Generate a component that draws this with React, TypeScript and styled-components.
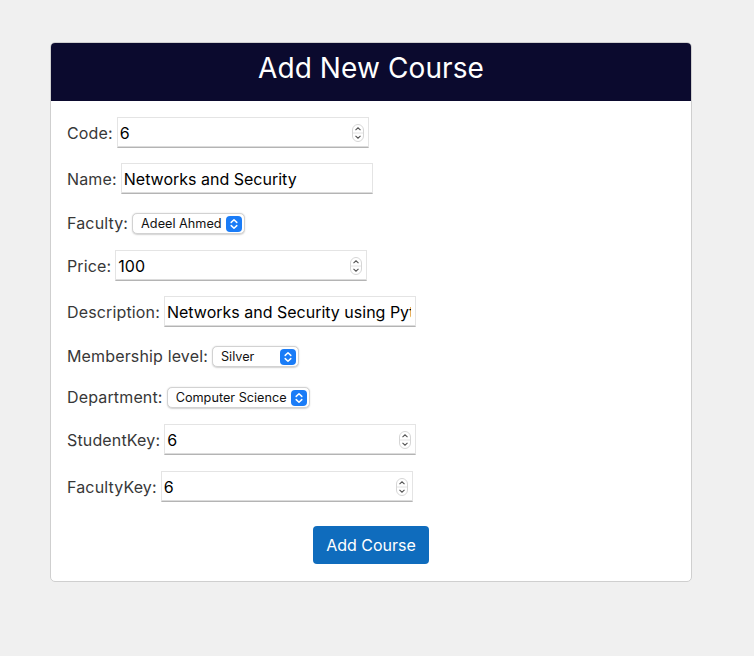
import React from "react";
import styled, { createGlobalStyle } from "styled-components";

const Global = createGlobalStyle`
  html, body { margin: 0; padding: 0; background: #f0f0f0; }
  body { font-family: Inter, "Noto Sans", sans-serif; }
`;

const Page = styled.div`
  padding: 42px 61px 0 50px;
  min-height: 656px;
  box-sizing: border-box;
`;

const Card = styled.div`
  width: 642px;
  background: #fff;
  border: 1px solid #cfcfcf;
  border-radius: 5px;
  overflow: hidden;
  box-sizing: border-box;
`;

const Header = styled.div`
  background: #0b0a2e;
  height: 58px;
  box-sizing: border-box;
  padding-bottom: 9px;
  display: flex;
  align-items: center;
  justify-content: center;
`;

const Title = styled.h2`
  margin: 0;
  color: #fff;
  font-family: Inter, sans-serif;
  font-weight: 400;
  font-size: 28px;
  line-height: 1;
  letter-spacing: 0.1px;
`;

const Body = styled.form`
  padding: 16px 16px 17px 16px;
  display: flex;
  flex-direction: column;
  gap: 15px;
`;

const Row = styled.div<{ $select?: boolean; $extra?: number }>`
  display: flex;
  align-items: ${(p) => (p.$select ? "flex-end" : "center")};
  height: ${(p) => (p.$select ? "26px" : "31px")};
  margin-top: ${(p) => p.$extra ?? 0}px;
  gap: 4px;
`;

const Label = styled.label<{ $select?: boolean }>`
  font-family: Inter, sans-serif;
  font-size: 16px;
  line-height: 20px;
  letter-spacing: 0.15px;
  color: #383838;
  margin-bottom: ${(p) => (p.$select ? "2px" : "0")};
  white-space: nowrap;
`;

const InputBox = styled.div`
  width: 252px;
  height: 31px;
  box-sizing: border-box;
  display: flex;
  align-items: center;
  background: #fff;
  border: 1px solid #e4e4e4;
  border-bottom: 1px solid #b4b4b4;
  box-shadow: inset 0 -1px 0 #dcdcdc;
  padding: 0 4px 0 2px;
`;

const TextInput = styled.input`
  flex: 1;
  min-width: 0;
  border: none;
  outline: none;
  background: transparent;
  font-family: Inter, sans-serif;
  font-size: 16px;
  color: #000;
  padding: 0;
  height: 100%;
`;

const SelectBox = styled.div<{ $w: number }>`
  width: ${(p) => p.$w}px;
  height: 21px;
  margin-bottom: 1px;
  box-sizing: border-box;
  display: flex;
  align-items: center;
  background: #fff;
  border: 0.5px solid #d2d2d2;
  border-radius: 5px;
  box-shadow: 0 0.5px 1.5px rgba(0, 0, 0, 0.18);
  padding: 0 2px 0 8px;
`;

const Select = styled.select`
  flex: 1;
  min-width: 0;
  appearance: none;
  -webkit-appearance: none;
  border: none;
  outline: none;
  background: transparent;
  font-family: Inter, sans-serif;
  font-size: 12.7px;
  color: #111;
  padding: 0;
`;

const Actions = styled.div`
  display: flex;
  justify-content: center;
  padding-top: 9px;
`;

const Button = styled.button`
  background: #0f6cbd;
  color: #fff;
  border: none;
  border-radius: 4px;
  height: 38px;
  padding: 0 13px;
  font-family: Inter, sans-serif;
  font-size: 16px;
  cursor: pointer;
`;

const Spinner = () => (
  <svg width="12" height="18" viewBox="0 0 12 18">
    <rect x="0.5" y="0.5" width="11" height="17" rx="5.5" fill="#fff" stroke="#d6d6d6" />
    <line x1="1" y1="9" x2="11" y2="9" stroke="#e2e2e2" />
    <path d="M3.5 6.2 L6 3.8 L8.5 6.2" fill="none" stroke="#555" strokeWidth="1.1" />
    <path d="M3.5 11.8 L6 14.2 L8.5 11.8" fill="none" stroke="#555" strokeWidth="1.1" />
  </svg>
);

const SelectArrow = () => (
  <svg width="16" height="16" viewBox="0 0 16 16" style={{ flex: "none" }}>
    <rect x="0" y="0" width="16" height="16" rx="4" fill="#1a7cf7" />
    <path d="M5.2 6.4 L8 3.8 L10.8 6.4" fill="none" stroke="#fff" strokeWidth="1.5" strokeLinecap="round" strokeLinejoin="round" />
    <path d="M5.2 9.6 L8 12.2 L10.8 9.6" fill="none" stroke="#fff" strokeWidth="1.5" strokeLinecap="round" strokeLinejoin="round" />
  </svg>
);

const NumberField = ({ label, value, extra }: { label: string; value: string; extra?: number }) => (
  <Row $extra={extra}>
    <Label>{label}</Label>
    <InputBox>
      <TextInput defaultValue={value} />
      <Spinner />
    </InputBox>
  </Row>
);

const TextField = ({ label, value }: { label: string; value: string }) => (
  <Row>
    <Label>{label}</Label>
    <InputBox>
      <TextInput defaultValue={value} />
    </InputBox>
  </Row>
);

const SelectField = ({ label, value, width }: { label: string; value: string; width: number }) => (
  <Row $select>
    <Label $select>{label}</Label>
    <SelectBox $w={width}>
      <Select defaultValue={value}>
        <option>{value}</option>
      </Select>
      <SelectArrow />
    </SelectBox>
  </Row>
);

export default function App() {
  return (
    <>
      <Global />
      <Page>
        <Card>
          <Header>
            <Title>Add New Course</Title>
          </Header>
          <Body onSubmit={(e) => e.preventDefault()}>
            <NumberField label="Code:" value="6" />
            <TextField label="Name:" value="Networks and Security" />
            <SelectField label="Faculty:" value="Adeel Ahmed" width={113} />
            <NumberField label="Price:" value="100" />
            <TextField label="Description:" value="Networks and Security using Python" />
            <SelectField label="Membership level:" value="Silver" width={87} />
            <SelectField label="Department:" value="Computer Science" width={143} />
            <NumberField label="StudentKey:" value="6" />
            <NumberField label="FacultyKey:" value="6" extra={1} />
            <Actions>
              <Button type="submit">Add Course</Button>
            </Actions>
          </Body>
        </Card>
      </Page>
    </>
  );
}
